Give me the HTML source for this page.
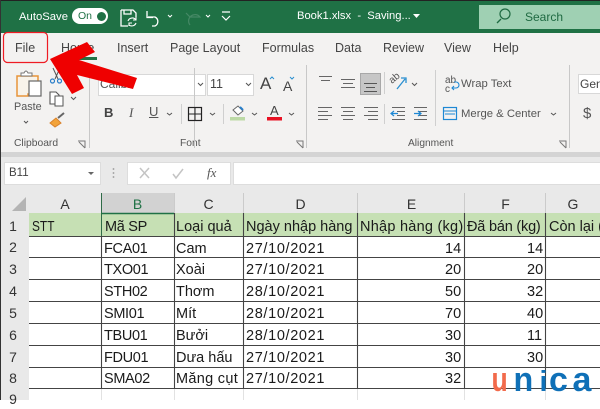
<!DOCTYPE html>
<html><head><meta charset="utf-8"><style>
html,body{margin:0;padding:0}
body{width:600px;height:400px;overflow:hidden;position:relative;background:#fff;font-family:"Liberation Sans",sans-serif;color:#333}
.a{position:absolute;white-space:nowrap}
.t{font-size:12.5px;color:#444;top:40px;line-height:16px}
.c{font-size:14.5px;color:#1a1a1a;line-height:20px;letter-spacing:0;margin-top:1px}
.d{letter-spacing:.65px;left:246px}
.k{left:104px;letter-spacing:-.35px}
.w{left:176px}
.h{font-size:14px;color:#333;line-height:20px;text-align:center}
svg{position:absolute;left:0;top:0}
</style></head><body>
<div class="a" style="left:0;top:0;width:600px;height:33px;background:#1f7145"></div>
<div class="a" style="left:0;top:0;width:600px;height:1px;background:#222"></div>
<div class="a" style="left:479px;top:5px;width:121px;height:24px;background:#9fd0b3"></div>
<div class="a" style="left:19px;top:9px;font-size:11.3px;color:#fff;line-height:16px">AutoSave</div>
<div class="a" style="left:72px;top:8px;width:36px;height:16px;border-radius:8px;background:#fff"></div>
<div class="a" style="left:78px;top:9px;font-size:10.5px;color:#1f7145;line-height:14px">On</div>
<div class="a" style="left:97px;top:12px;width:9px;height:9px;border-radius:5px;background:#1f7145"></div>
<div class="a" style="left:297px;top:8px;font-size:11.2px;color:#fff;line-height:16px">Book1.xlsx&nbsp; -&nbsp; Saving...</div>
<div class="a" style="left:525px;top:9px;font-size:12px;color:#1f6a42;line-height:16px">Search</div>

<div class="a" style="left:0;top:33px;width:600px;height:119px;background:#f3f2f1"></div>
<div class="a" style="left:0;top:152px;width:600px;height:5px;background:#d4d4d4"></div>
<div class="a" style="left:0;top:157px;width:600px;height:36px;background:#e9e9e9"></div>
<div class="a t" style="left:15px">File</div>
<div class="a t" style="left:61px">Home</div>
<div class="a t" style="left:117px">Insert</div>
<div class="a t" style="left:170px">Page Layout</div>
<div class="a t" style="left:262px">Formulas</div>
<div class="a t" style="left:335px">Data</div>
<div class="a t" style="left:383px">Review</div>
<div class="a t" style="left:444px">View</div>
<div class="a t" style="left:493px">Help</div>
<div class="a" style="left:62px;top:57px;width:35px;height:3px;background:#217346"></div>

<div class="a" style="left:98px;top:74px;width:106px;height:20px;background:#fff;border:1px solid #d8d8d8"></div>
<div class="a" style="left:100px;top:76px;font-size:12px;color:#555;line-height:16px">Calibri</div>
<div class="a" style="left:207px;top:74px;width:45px;height:20px;background:#fff;border:1px solid #d8d8d8"></div>
<div class="a" style="left:210px;top:76px;font-size:12.5px;color:#444;line-height:16px">11</div>
<div class="a" style="left:14px;top:99px;font-size:10.8px;color:#555;line-height:16px">Paste</div>
<div class="a" style="left:14px;top:136px;font-size:10.3px;color:#555;line-height:16px">Clipboard</div>
<div class="a" style="left:180px;top:136px;font-size:10.3px;color:#555;line-height:16px">Font</div>
<div class="a" style="left:408px;top:136px;font-size:10.2px;color:#555;line-height:16px">Alignment</div>
<div class="a" style="left:104px;top:105px;font-size:13px;font-weight:bold;color:#444;line-height:16px">B</div>
<div class="a" style="left:129px;top:105px;font-size:13px;font-style:italic;font-family:'Liberation Serif',serif;color:#555;line-height:16px">I</div>
<div class="a" style="left:149px;top:104px;font-size:13px;color:#555;line-height:16px;text-decoration:underline">U</div>
<div class="a" style="left:260px;top:74px;font-size:17px;color:#444;line-height:20px">A</div>
<div class="a" style="left:283px;top:76px;font-size:14px;color:#444;line-height:20px">A</div>
<div class="a" style="left:270px;top:103px;font-size:13px;color:#444;line-height:16px">A</div>
<div class="a" style="left:461px;top:76px;font-size:11.3px;color:#555;line-height:16px">Wrap Text</div>
<div class="a" style="left:461px;top:106px;font-size:11.3px;color:#555;line-height:16px">Merge &amp; Center</div>
<div class="a" style="left:578px;top:74px;width:22px;height:20px;background:#fff;border:1px solid #d8d8d8;border-right:0;box-sizing:border-box"></div>
<div class="a" style="left:580px;top:76px;font-size:12px;color:#444;line-height:16px">Gen</div>
<div class="a" style="left:583px;top:104px;font-size:15px;color:#555;line-height:20px">$</div>

<div class="a" style="left:4px;top:162px;width:95px;height:21px;background:#fff;border:1px solid #ddd"></div>
<div class="a" style="left:9px;top:165px;font-size:11.5px;color:#444;line-height:16px">B11</div>
<div class="a" style="left:127px;top:162px;width:102px;height:21px;background:#fff;border:1px solid #ddd"></div>
<div class="a" style="left:233px;top:162px;width:367px;height:21px;background:#fff;border:1px solid #ddd;border-right:0"></div>
<div class="a" style="left:207px;top:164px;font:italic 13px 'Liberation Serif',serif;color:#555;line-height:18px">fx</div>

<div class="a" style="left:0;top:193px;width:29px;height:207px;background:#e9e9e9"></div>
<div class="a" style="left:29px;top:193px;width:571px;height:20px;background:#e9e9e9"></div>
<div class="a" style="left:101px;top:193px;width:73px;height:20px;background:#d2d2d2"></div>
<div class="a" style="left:29px;top:213px;width:571px;height:23px;background:#c6e0b4"></div>
<div class="a" style="left:0;top:0;width:1px;height:400px;background:#333"></div>

<div class="a h" style="left:29px;top:194px;width:72px">A</div>
<div class="a h" style="left:101px;top:194px;width:73px;color:#1f7145">B</div>
<div class="a h" style="left:174px;top:194px;width:69px">C</div>
<div class="a h" style="left:243px;top:194px;width:115px">D</div>
<div class="a h" style="left:358px;top:194px;width:107px">E</div>
<div class="a h" style="left:465px;top:194px;width:81px">F</div>
<div class="a h" style="left:546px;top:194px;width:54px">G</div>
<div class="a h" style="left:2px;top:216px;width:22px">1</div>
<div class="a h" style="left:2px;top:237px;width:22px">2</div>
<div class="a h" style="left:2px;top:259px;width:22px">3</div>
<div class="a h" style="left:2px;top:281px;width:22px">4</div>
<div class="a h" style="left:2px;top:303px;width:22px">5</div>
<div class="a h" style="left:2px;top:325px;width:22px">6</div>
<div class="a h" style="left:2px;top:347px;width:22px">7</div>
<div class="a h" style="left:2px;top:368px;width:22px">8</div>
<div class="a h" style="left:2px;top:389px;width:22px">9</div>

<div class="a c" style="left:32px;top:216px;transform:scaleX(.82);transform-origin:left">STT</div>
<div class="a c" style="left:105px;top:216px;letter-spacing:-.3px">Mã SP</div>
<div class="a c w" style="top:216px">Loại quả</div>
<div class="a c" style="left:246px;top:216px">Ngày nhập hàng</div>
<div class="a c" style="left:360px;top:216px;letter-spacing:.25px">Nhập hàng (kg)</div>
<div class="a c" style="left:467px;top:216px;letter-spacing:-.2px">Đã bán (kg)</div>
<div class="a c" style="left:549px;top:216px">Còn lại (</div>

<div class="a c k" style="top:238px">FCA01</div><div class="a c w" style="top:238px">Cam</div><div class="a c d" style="top:238px">27/10/2021</div>
<div class="a c k" style="top:259px">TXO01</div><div class="a c w" style="top:259px">Xoài</div><div class="a c d" style="top:259px">27/10/2021</div>
<div class="a c k" style="top:281px">STH02</div><div class="a c w" style="top:281px">Thơm</div><div class="a c d" style="top:281px">28/10/2021</div>
<div class="a c k" style="top:303px">SMI01</div><div class="a c w" style="top:303px">Mít</div><div class="a c d" style="top:303px">28/10/2021</div>
<div class="a c k" style="top:325px">TBU01</div><div class="a c w" style="top:325px">Bưởi</div><div class="a c d" style="top:325px">28/10/2021</div>
<div class="a c k" style="top:347px">FDU01</div><div class="a c w" style="top:347px">Dưa hấu</div><div class="a c d" style="top:347px">27/10/2021</div>
<div class="a c k" style="top:368px">SMA02</div><div class="a c" style="left:176px;top:368px;letter-spacing:.3px">Măng cụt</div><div class="a c d" style="top:368px">27/10/2021</div>

<div class="a c" style="left:445px;top:238px">14</div><div class="a c" style="left:527px;top:238px">14</div>
<div class="a c" style="left:445px;top:259px">20</div><div class="a c" style="left:527px;top:259px">20</div>
<div class="a c" style="left:445px;top:281px">50</div><div class="a c" style="left:527px;top:281px">32</div>
<div class="a c" style="left:445px;top:303px">70</div><div class="a c" style="left:527px;top:303px">40</div>
<div class="a c" style="left:445px;top:325px">30</div><div class="a c" style="left:527px;top:325px">11</div>
<div class="a c" style="left:445px;top:347px">30</div><div class="a c" style="left:527px;top:347px">30</div>
<div class="a c" style="left:445px;top:368px">32</div>

<svg width="600" height="400" viewBox="0 0 600 400" fill="none">
<!-- grid -->
<g stroke="#444" stroke-width="1.100">
<path d="M29 236.500H600M29 257.500H600M29 279.500H600M29 301.500H600M29 323.500H600M29 345.500H600M29 367.500H600M29 388.500H600"/>
<path d="M101.500 236V388M174.500 213V388M243.500 213V388M357.500 213V388M464.500 213V388M545.500 213V388"/>
</g>
<path d="M101.500 193V236" stroke="#2f6b47" stroke-width="1"/>
<path d="M174.500 193V213M243.500 193V213M357.500 193V213M464.500 193V213M545.500 193V213" stroke="#bdbdbd" stroke-width="1" opacity=".7"/>
<path d="M101.500 389V400M174.500 389V400M243.500 389V400M357.500 389V400M464.500 389V400M545.500 389V400" stroke="#e2e2e2"/>
<path d="M101 213.500H174" stroke="#1f7145" stroke-width="1.500"/>
<path d="M12 211L26 197V211Z" fill="#b4b4b4"/>
<!-- title bar icons -->
<g stroke="#fff" stroke-width="1.300">
<path d="M121 10H133L136 13V17M124 10V14H131V10M121 10V26H128"/>
<path d="M128 21a4.500 4.500 0 0 1 8 -1M136 23a4.500 4.500 0 0 1 -7 2M136 17V20H133M129 26V23H132" stroke-width="1.100"/>
<path d="M148 17H155A5 5 0 0 1 155 26H152M147 11V17.500H153"/>
<path d="M168 15l2 2l2-2M206 15l2 2l2-2" stroke-width="1"/>
<path d="M222 12H230M222 16l4 4l4-4" stroke-width="1.200"/>
</g>
<path d="M186 13l4 4H200A5 5 0 0 0 190 25" stroke="#4f8f6d" stroke-width="1.200" opacity=".8"/>
<path d="M413 14l3.500 4l3.500-4z" fill="#fff"/>
<circle cx="505" cy="14" r="5" stroke="#1f6a42" stroke-width="1.200"/><path d="M501 19l-4 4" stroke="#1f6a42" stroke-width="1.300"/>
<!-- dividers -->
<path d="M89.500 68V148M194.500 68V148M306.500 65V148M569.500 65V148" stroke="#c8c8c8"/>
<path d="M181.500 104V124M223.500 104V124M384.500 72V94M384.500 104V124M435.500 70V126" stroke="#cfcfcf"/>
<!-- paste -->
<path d="M17 76H38V94H28V96H17Z" fill="#f8f3ea" stroke="#e8943a" stroke-width="1.500"/>
<path d="M21 76V73H24Q26 69 28 73H32V76Z" fill="#fff" stroke="#777"/>
<rect x="29" y="81" width="12" height="15" fill="#fff" stroke="#666" stroke-width="1.200"/>
<path d="M24 121l2 2l2-2" stroke="#555"/>
<!-- cut / copy / painter -->
<path d="M53 68l5 11M60 68l-5 11" stroke="#555"/>
<circle cx="52.500" cy="81" r="2" stroke="#2a7fc9" stroke-width="1.200"/><circle cx="59.500" cy="81" r="2" stroke="#2a7fc9" stroke-width="1.200"/>
<path d="M50 92H56L59 95V104H50Z" fill="#fff" stroke="#555" stroke-width="1.100"/><rect x="55" y="96" width="8" height="10" fill="#fff" stroke="#555"/>
<path d="M71 97l2.500 2.500l2.500-2.500" stroke="#555"/>
<path d="M50 123l6-5l5 5l-6 4z" fill="#f2a33a" stroke="#d9822b"/><path d="M58 118l6-5" stroke="#666" stroke-width="2"/>
<!-- corner launchers -->
<g stroke="#777"><path d="M78 141h7v7M79 142l6 6"/><path d="M296 141h7v7M297 142l6 6"/><path d="M559 141h7v7M560 142l6 6"/></g>
<!-- font -->
<path d="M198 83l2.500 2.500l2.500-2.500M246 83l2.500 2.500l2.500-2.500M167 113l2.500 2l2.500-2M210 113l2.500 2l2.500-2M252 113l2.500 2l2.500-2M289 113l2.500 2l2.500-2M412 83l2.500 2.500l2.500-2.500M551 113l2.500 2l2.500-2" stroke="#555"/>
<rect x="188.500" y="107.500" width="13" height="13" stroke="#222" stroke-width="1.200"/><path d="M195 107V121M188 114H202" stroke="#222"/>
<path d="M270 79l2-2l2 2M290 77l2 2l2-2" stroke="#2a8fd0"/>
<path d="M233 110l5-4l5 5l-5 4z" fill="#fff" stroke="#666"/><path d="M240 107l3 3" stroke="#2a7fc9" stroke-width="2"/>
<rect x="230" y="117" width="15" height="3.500" fill="#bcd9a5"/>
<rect x="267" y="117" width="15" height="3.500" fill="#e81123"/>
<!-- alignment -->
<g stroke="#666" stroke-width="1.100">
<path d="M319 76.500H332M321 80.500H330"/>
<path d="M341 79.500H355M343 83.500H353M341 87.500H355"/>
</g>
<rect x="360.500" y="73.500" width="20" height="21" fill="#c6c6c6" stroke="#a8a8a8"/>
<path d="M364 83.500H377M366 87.500H375M364 91.500H377" stroke="#555" stroke-width="1.100"/>
<path d="M318 107.500H332M318 111.500H328M318 115.500H332M318 119.500H328M341 107.500H355M343 111.500H353M341 115.500H355M343 119.500H353M364 107.500H378M368 111.500H378M364 115.500H378M368 119.500H378" stroke="#666" stroke-width="1.100"/>
<path d="M392 107.500H405M397 111.500H405M397 115.500H405M392 119.500H405M414 107.500H427M419 111.500H427M419 115.500H427M414 119.500H427" stroke="#666" stroke-width="1"/>
<path d="M392 113.500H398M394 111l-3 2.500l3 2.500" stroke="#1e88d4" stroke-width="1.200"/>
<path d="M414 113.500H420M418 111l3 2.500l-3 2.500" stroke="#1e88d4" stroke-width="1.200"/>
<path d="M397 89L405 79M401 78h5v5" stroke="#2a8fd0" stroke-width="1.300"/>
<text x="392" y="84" font-family="Liberation Sans,sans-serif" font-size="10" fill="#555" transform="rotate(-40 392 84)">ab</text>
<text x="445" y="83" font-family="Liberation Sans,sans-serif" font-size="10" fill="#555">ab</text>
<text x="445" y="92" font-family="Liberation Sans,sans-serif" font-size="10" fill="#555">c</text>
<path d="M452 88h4a3 3 0 0 0 0-6h-2M454 86l-2 2l2 2" stroke="#1e88d4" stroke-width="1.100"/>
<rect x="443.500" y="107.500" width="13" height="12" stroke="#1e88d4" stroke-width="1.200"/><path d="M443 111H457M445 114H455" stroke="#1e88d4"/>
<!-- formula bar -->
<path d="M88 172l3 3l3-3z" fill="#666"/>
<path d="M113.500 168v2M113.500 172v2M113.500 176v2" stroke="#aaa" stroke-width="1.500"/>
<path d="M140 168l9 10M149 168l-9 10M173 174l3 4l7-9" stroke="#c4c4c4" stroke-width="1.500"/>
<!-- arrow -->
<path d="M50 59L87 42L95 52L79 60L137 78L133 89L77 75L84 88L72 94Z" fill="#ef0000"/>
<!-- File box -->
<rect x="3.500" y="32.500" width="44" height="30" rx="4" stroke="#ef1c24" stroke-width="1.200"/>
<!-- logo -->
<g font-family="Liberation Sans,sans-serif" font-weight="bold" font-size="34">
<text transform="translate(491.500 391) scale(.78 1)" fill="#f26a4b">u</text>
<text transform="translate(513.500 391) scale(.95 1)" fill="#0f70b7">n</text>
<text transform="translate(539.500 391)" font-size="29" fill="#0f70b7">i</text>
<text transform="translate(549 391)" fill="#0f70b7">c</text>
<text transform="translate(572.500 391)" fill="#0f70b7">a</text>
</g>
</svg>
</body></html>
